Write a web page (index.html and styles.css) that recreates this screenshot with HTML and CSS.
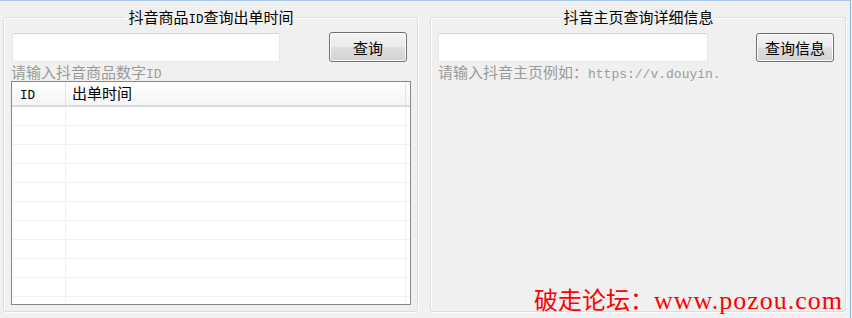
FILE: index.html
```html
<!DOCTYPE html>

<html>
  <head>
    <meta charset="UTF-8" />
    <meta name="viewport" content="width=device-width, initial-scale=1.0" />
    <title>抖音查询</title>

    <link rel="stylesheet" href="styles.css">
  </head>

  <body>
    <div class="window">
      <div class="panels">
        <fieldset class="group">
          <legend class="group__title">抖音商品<span class="latin">ID</span>查询出单时间</legend>

          <div class="group__row">
            <input class="field" type="text" />
            <button class="btn">查询</button>
          </div>
          <p class="hint">请输入抖音商品数字<span class="latin">ID</span></p>

          <div class="list">
            <div class="list__head">
              <div class="list__cell list__cell--id"><span class="latin">ID</span></div>
              <div class="list__cell list__cell--time">出单时间</div>
            </div>
            <div class="list__row"><div class="list__cell list__cell--id"></div><div class="list__cell list__cell--time"></div></div>
            <div class="list__row"><div class="list__cell list__cell--id"></div><div class="list__cell list__cell--time"></div></div>
            <div class="list__row"><div class="list__cell list__cell--id"></div><div class="list__cell list__cell--time"></div></div>
            <div class="list__row"><div class="list__cell list__cell--id"></div><div class="list__cell list__cell--time"></div></div>
            <div class="list__row"><div class="list__cell list__cell--id"></div><div class="list__cell list__cell--time"></div></div>
            <div class="list__row"><div class="list__cell list__cell--id"></div><div class="list__cell list__cell--time"></div></div>
            <div class="list__row"><div class="list__cell list__cell--id"></div><div class="list__cell list__cell--time"></div></div>
            <div class="list__row"><div class="list__cell list__cell--id"></div><div class="list__cell list__cell--time"></div></div>
            <div class="list__row"><div class="list__cell list__cell--id"></div><div class="list__cell list__cell--time"></div></div>
            <div class="list__row"><div class="list__cell list__cell--id"></div><div class="list__cell list__cell--time"></div></div>
            <div class="list__row"><div class="list__cell list__cell--id"></div><div class="list__cell list__cell--time"></div></div>
          </div>
        </fieldset>

        <fieldset class="group group--home">
          <legend class="group__title">抖音主页查询详细信息</legend>

          <div class="group__row group__row--home">
            <input class="field field--home" type="text" />
            <button class="btn">查询信息</button>
          </div>
          <p class="hint">请输入抖音主页例如：<span class="latin">https://v.douyin.</span></p>
        </fieldset>
      </div>

      <div class="watermark">破走论坛：<span class="watermark__url">www.pozou.com</span></div>
    </div>
  </body>
</html>
```

FILE: styles.css
```css
:root {
  --color-bg: #f0f0f0;
  --color-frame: #a9c9ec;
  --color-frame-side: #86b8ea;
  --color-group: #d5dfe5;
  --color-text: #000;
  --color-hint: #9a9a9a;
  --color-list-border: #828790;
  --color-grid: #efefef;
  --color-head-line: #dadada;
  --color-red: #ff0000;

  --font-ui: "Noto Sans CJK SC", "Noto Sans", sans-serif;
  --font-latin: "Liberation Mono", "DejaVu Sans Mono", monospace;
}

* {
  box-sizing: border-box;
  margin: 0;
  padding: 0;
}

html,
body {
  background-color: var(--color-bg);
  width: 100%;
  height: 100%;
  overflow: hidden;
}

body {
  font-family: var(--font-ui);
  font-size: 15px;
  color: var(--color-text);
}

.latin {
  font-family: var(--font-latin);
  font-size: 12.5px;
  line-height: 1;
}

.window {
  position: relative;
  width: 851px;
  height: 318px;
  border-top: 1px solid var(--color-frame);
  border-right: 1px solid var(--color-frame-side);
}

.panels {
  display: flex;
  gap: 12px;
  padding: 7px 0 0 3px;
}

/* group boxes */

.group {
  width: 415px;
  height: 304px;
  border: 1px solid var(--color-group);
  border-radius: 3px;
  box-shadow: inset 1px 1px 0 #fff, 1px 1px 0 #fff;
  padding: 0 6px 0 7px;
}

.group--home {
  width: 416px;
}

.group__title {
  margin: 0 auto;
  padding: 0 2px;
  line-height: 18px;
  height: 18px;
}

.group__row {
  display: flex;
  align-items: flex-end;
  justify-content: space-between;
  margin-top: 6px;
  padding: 0 4px 0 1px;
}

.group__row--home {
  margin-top: 7px;
  padding: 0 5px 0 0;
}

.field {
  width: 268px;
  height: 29px;
  background-color: #fff;
  border: 1px solid #e3e9ef;
  border-top-color: #d0d4d9;
  border-radius: 2px;
  outline: none;
}

.field--home {
  width: 270px;
}

.btn {
  width: 78px;
  height: 30px;
  font-family: var(--font-ui);
  font-size: 15px;
  color: var(--color-text);
  border: 1px solid #707070;
  border-radius: 3px;
  background: linear-gradient(#f4f4f4 0%, #ebebeb 48%, #dedede 52%, #d2d2d2 100%);
  box-shadow: inset 0 0 0 1px #fcfcfc;
}

.group__row--home .btn {
  height: 29px;
}

.hint {
  height: 18px;
  margin-top: 1px;
  line-height: 18px;
  color: var(--color-hint);
  white-space: nowrap;
}

.hint .latin {
  font-size: 13px;
}

/* list view */

.list {
  width: 400px;
  height: 224px;
  border: 1px solid var(--color-list-border);
  background-color: #fff;
  overflow: hidden;
}

.list__head,
.list__row {
  display: flex;
}

.list__head {
  height: 25px;
  border-bottom: 2px solid var(--color-head-line);
  background: linear-gradient(#ffffff, #f4f5f7);
}

.list__row {
  height: 19px;
  border-bottom: 1px solid var(--color-grid);
}

.list__cell {
  height: 100%;
  border-right: 1px solid var(--color-grid);
}

.list__head .list__cell {
  line-height: 22px;
  border-right-color: #e3e5e8;
  padding-left: 6px;
}

.list__head .list__cell--id {
  padding-left: 8px;
}

.list__cell--id {
  width: 54px;
}

.list__cell--time {
  width: 340px;
}

/* overlay */

.watermark {
  position: absolute;
  right: 7px;
  bottom: 4px;
  font-size: 24px;
  line-height: 1;
  color: var(--color-red);
}

.watermark__url {
  font-family: "Liberation Serif", serif;
  font-size: 26px;
  letter-spacing: 1px;
}
```
